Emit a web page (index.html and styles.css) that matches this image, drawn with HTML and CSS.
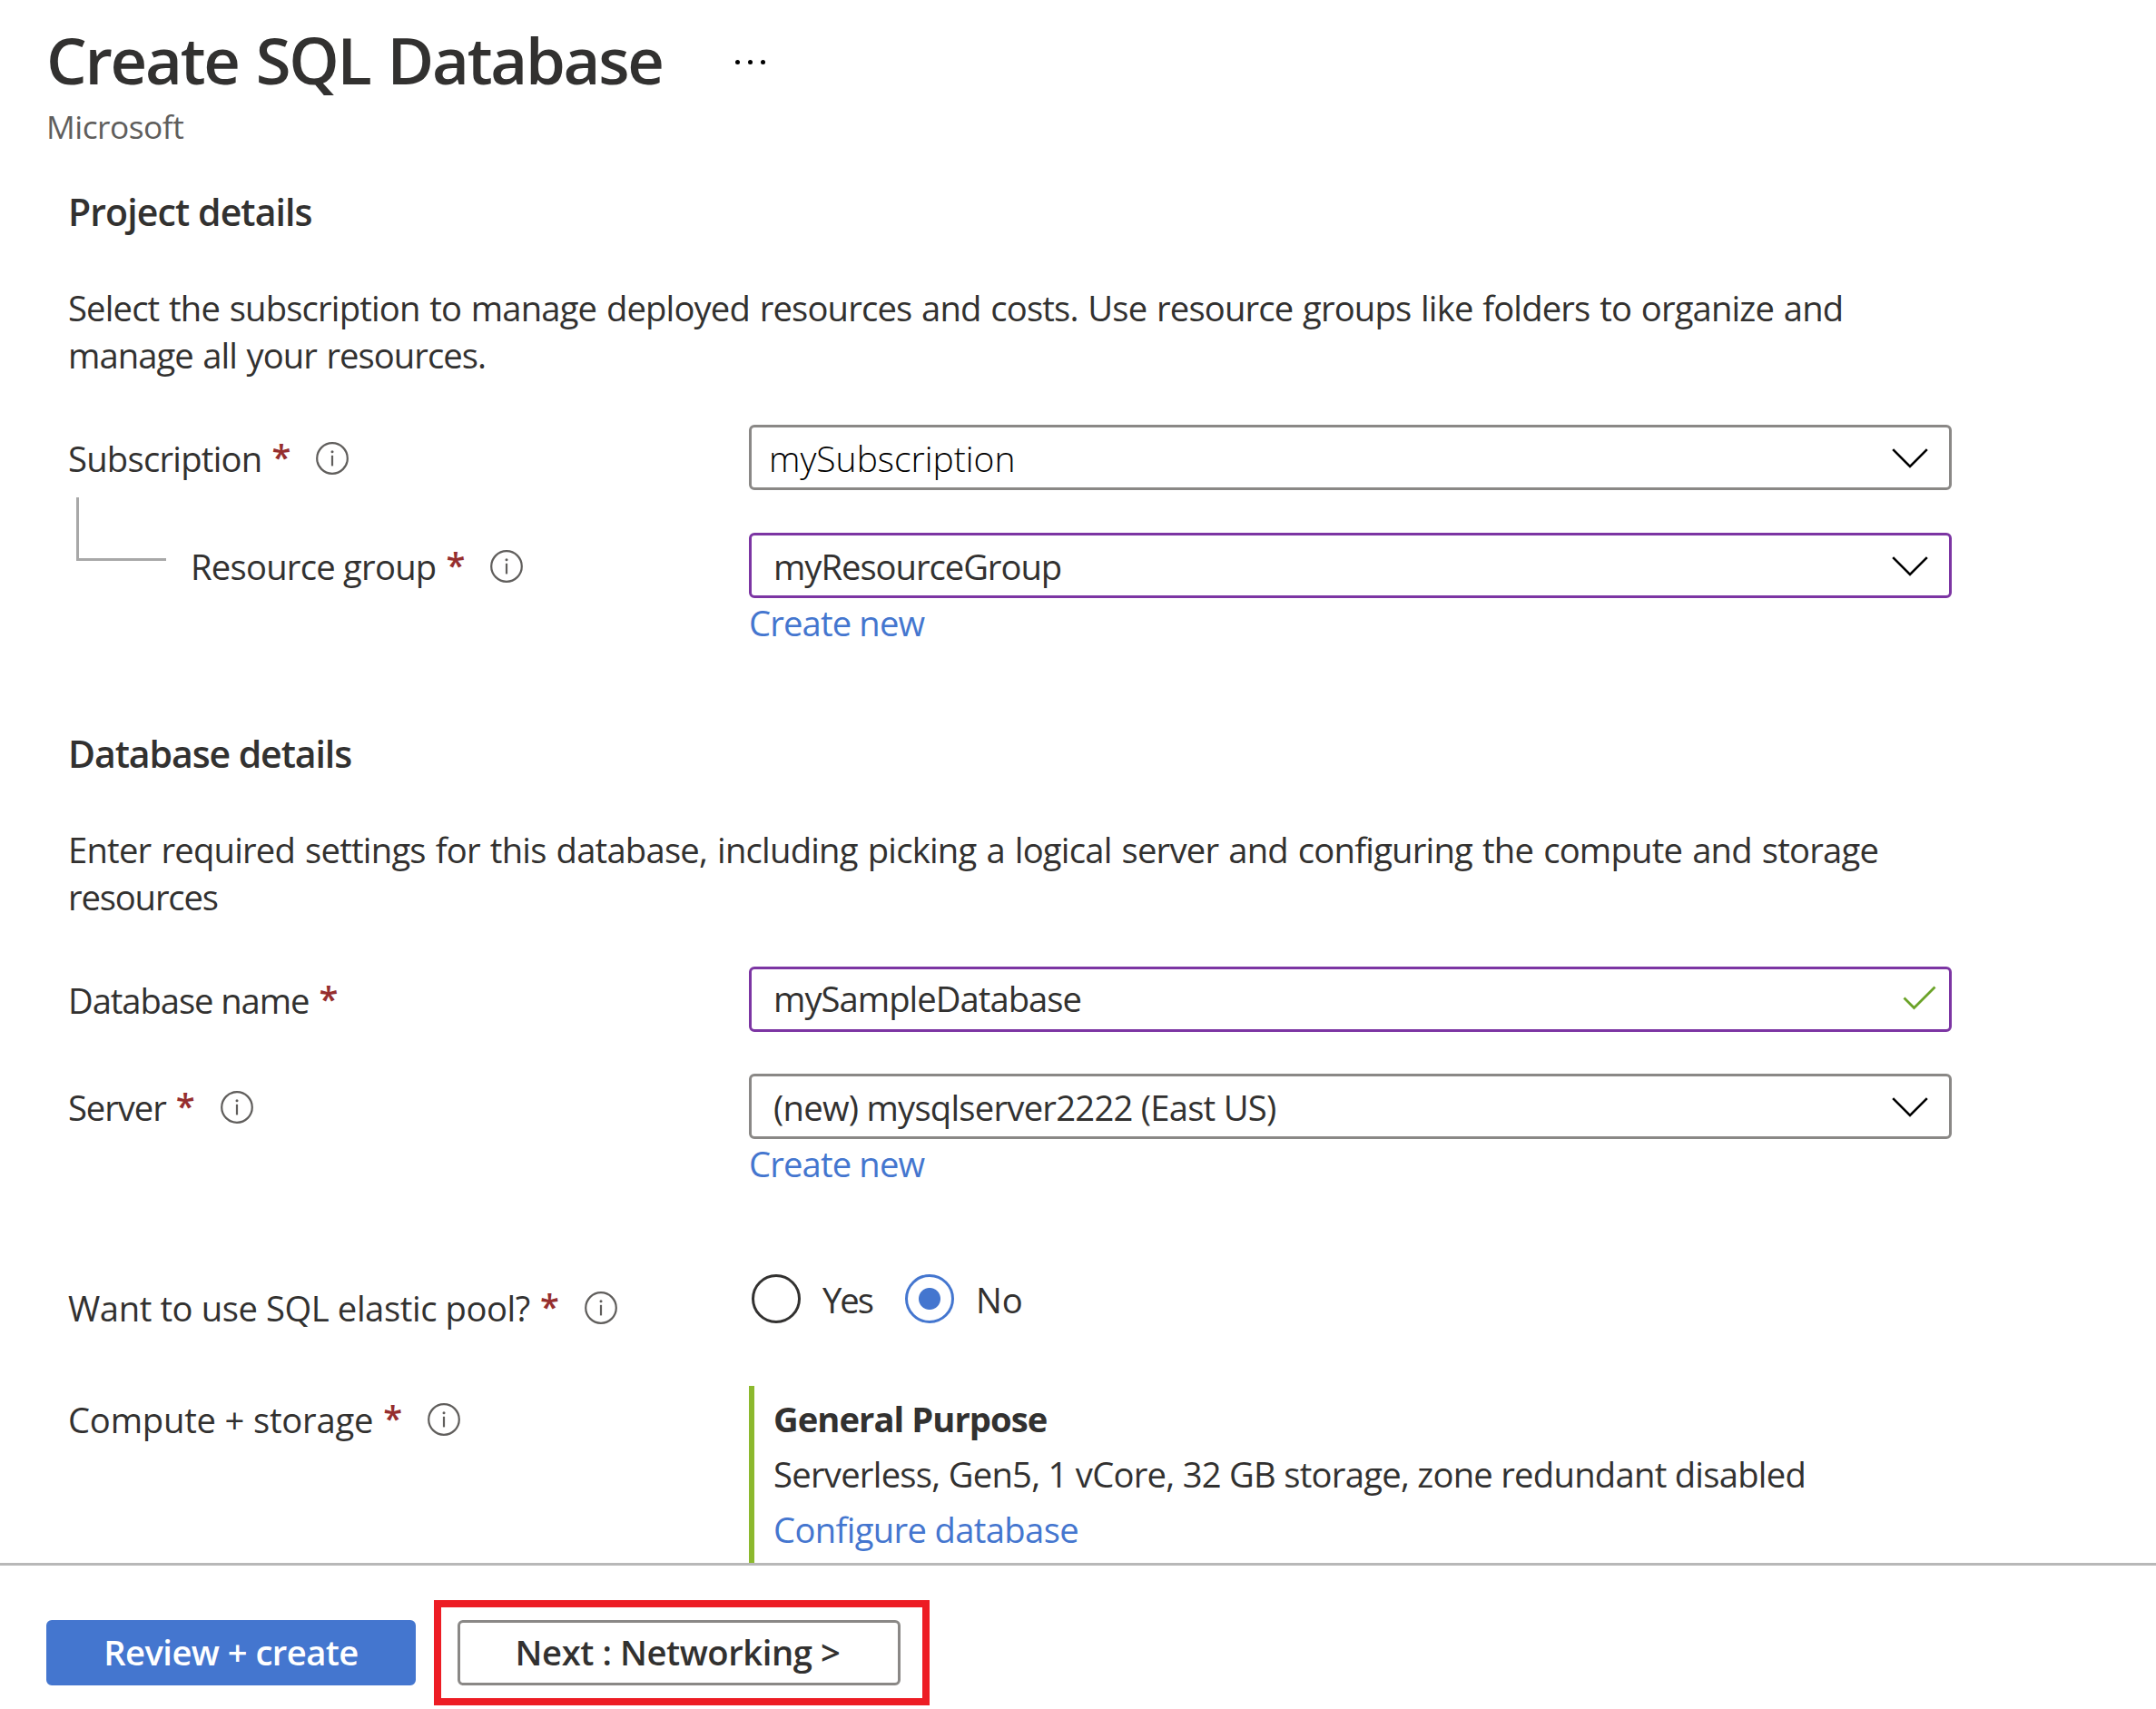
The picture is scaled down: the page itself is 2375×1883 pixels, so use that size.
FILE: index.html
```html
<!DOCTYPE html>
<html lang="en">
<head>
<meta charset="utf-8">
<title>Create SQL Database</title>
<link rel="stylesheet" href="styles.css">
</head>
<body>
<svg class="sprite" aria-hidden="true">
  <symbol id="info" viewBox="0 0 36 36"><circle cx="18" cy="18" r="16.8" fill="none" stroke="#605e5c" stroke-width="2.2"/><path d="M18 14.8V26.4" stroke="#605e5c" stroke-width="2.2"/><circle cx="18" cy="10.8" r="1.5" fill="#605e5c"/></symbol>
  <symbol id="chevron" viewBox="0 0 40 22"><path d="M1.2 1.2 20 20 38.8 1.2" fill="none" stroke="#000" stroke-width="2.6"/></symbol>
</svg>
<main class="page">
  <header class="header">
    <div class="title-row"><h1 class="title">Create SQL Database</h1><span class="more"><i></i><i></i><i></i></span></div>
    <p class="publisher">Microsoft</p>
  </header>

  <section class="section">
    <h2 class="heading">Project details</h2>
    <p class="intro">Select the subscription to manage deployed resources and costs. Use resource groups like folders to organize and<br><span class="tail">manage all your resources.</span></p>
    <div class="row">
      <div class="label"><span>Subscription</span><b class="req">*</b><svg class="info"><use href="#info"/></svg></div>
      <div class="select plain"><span>mySubscription</span><svg class="chevron"><use href="#chevron"/></svg></div>
    </div>
    <div class="row child">
      <div class="label"><i class="connector"></i><span>Resource group</span><b class="req">*</b><svg class="info"><use href="#info"/></svg></div>
      <div class="select edited"><span>myResourceGroup</span><svg class="chevron"><use href="#chevron"/></svg></div>
      <a class="link">Create new</a>
    </div>
  </section>

  <section class="section second">
    <h2 class="heading">Database details</h2>
    <p class="intro">Enter required settings for this database, including picking a logical server and configuring the compute and storage<br><span class="tail">resources</span></p>
    <div class="row">
      <div class="label tight"><span>Database name</span><b class="req">*</b></div>
      <div class="select edited input"><span>mySampleDatabase</span><svg class="check" viewBox="0 0 38 27"><path d="M1.5 13.5 12.5 24.5 35.5 1.5" fill="none" stroke="#6ba328" stroke-width="2.8"/></svg></div>
    </div>
    <div class="row server">
      <div class="label tight"><span>Server</span><b class="req">*</b><svg class="info"><use href="#info"/></svg></div>
      <div class="select"><span>(new) mysqlserver2222 (East US)</span><svg class="chevron"><use href="#chevron"/></svg></div>
      <a class="link">Create new</a>
    </div>
    <div class="row pool">
      <div class="label"><span>Want to use SQL elastic pool?</span><b class="req">*</b><svg class="info"><use href="#info"/></svg></div>
      <div class="radios">
        <i class="radio"></i><span class="yes">Yes</span>
        <i class="radio on"></i><span class="no">No</span>
      </div>
    </div>
    <div class="row compute">
      <div class="label"><span>Compute + storage</span><b class="req">*</b><svg class="info"><use href="#info"/></svg></div>
      <div class="tier">
        <strong>General Purpose</strong>
        <p>Serverless, Gen5, 1 vCore, 32 GB storage, zone redundant disabled</p>
        <a>Configure database</a>
      </div>
    </div>
  </section>
</main>
<footer class="footer">
  <button class="btn primary">Review + create</button>
  <div class="callout"><button class="btn next">Next : Networking &gt;</button></div>
</footer>
</body>
</html>
```
FILE: styles.css
```css
* { box-sizing: border-box; margin: 0; padding: 0; }
body { width: 2375px; height: 1883px; overflow: hidden; background: #fff; color: #323130; font: 38.2px/52px "Open Sans", "Noto Sans", sans-serif; letter-spacing: -0.75px; }
.sprite { display: none; }
span, p { white-space: nowrap; }

.page { height: 1722px; padding: 30px 0 0 51px; overflow: hidden; }
.title-row { display: flex; align-items: center; height: 72px; }
.title { font-size: 70.5px; line-height: 72px; font-weight: 600; letter-spacing: -2.25px; word-spacing: 3px; }
.more { display: flex; gap: 9px; margin-left: 80px; padding-top: 5px; }
.more i { width: 5px; height: 5px; border-radius: 50%; background: #000; }
.publisher { margin-top: 13px; font-size: 35.3px; line-height: 48px; letter-spacing: -0.5px; color: #605e5c; }

.section { padding-left: 24px; margin-top: 42px; }
.section.second { margin-top: 90px; }
.heading { font-size: 41px; line-height: 56px; font-weight: 600; letter-spacing: -0.9px; }
.second .heading { letter-spacing: -1.08px; }
.intro { margin: 52px 0 51px; letter-spacing: -0.83px; word-spacing: 1.6px; }
.second .intro { letter-spacing: -0.77px; word-spacing: 1.8px; }
.intro .tail { letter-spacing: -0.95px; }
.second .tail { letter-spacing: -1.15px; }

.row { display: grid; grid-template-columns: 750px 1325px; }
.row.server { margin-top: 46px; }
.row.child { margin-top: 47px; }
.label { display: flex; align-items: center; height: 72px; padding-top: 2px; }
.label.tight { letter-spacing: -1.07px; }
.pool .label { letter-spacing: -0.41px; }
.compute .label { letter-spacing: -0.2px; }
.req { margin-left: 11px; padding-bottom: 4px; color: #962e2e; font-weight: 600; letter-spacing: 0; }
.info { width: 36px; height: 36px; margin-left: 28px; }
.connector { width: 99px; height: 70px; margin: -83px 27px 0 9px; border: solid #a8a8a8; border-width: 0 0 3px 3px; }

.select { display: flex; align-items: center; justify-content: space-between; height: 72px; padding: 2px 23px 0 24px; border: 3px solid #8a8886; border-radius: 6px; }
.select.edited { border-color: #7c35a3; letter-spacing: -1.03px; }
.select.plain { padding-left: 19px; color: #000; font-size: 39px; font-weight: 300; letter-spacing: 0; }
.select.input { padding: 0 13px 3px 24px; letter-spacing: -0.96px; }
.chevron { width: 40px; height: 22px; }
.check { width: 38px; height: 27px; }
.link { grid-column: 2; margin-top: 1px; letter-spacing: -0.85px; }
.link, .tier a { color: #4476cf; }

.pool { margin-top: 96px; height: 123px; }
.radios { display: flex; height: 54px; line-height: 56px; padding-left: 3px; }
.radio { width: 54px; height: 54px; border: 3px solid #323130; border-radius: 50%; margin-right: 24px; }
.yes { width: 55px; margin-right: 36px; letter-spacing: -2px; }
.no { letter-spacing: 0; }
.radio.on { border-color: #4476cf; background: radial-gradient(circle, #4476cf 11.5px, transparent 12.5px); }

.tier { display: flex; flex-direction: column; height: 195px; padding: 6px 0 0 21px; border-left: 6px solid #8cb92e; line-height: 61px; letter-spacing: -0.73px; }
.tier strong { letter-spacing: -0.95px; }
.tier a { letter-spacing: -0.65px; }

.footer { display: flex; align-items: flex-start; height: 161px; padding: 38px 0 0 51px; border-top: 3px solid #b8b8b8; }
.btn { width: 488px; height: 72px; padding-bottom: 2px; border: 3px solid #8a8886; border-radius: 6px; background: #fff; color: #323130; font: 600 38.2px/64px "Open Sans", "Noto Sans", sans-serif; letter-spacing: -0.56px; }
.btn.primary { width: 407px; margin-top: 22px; border-color: #4476cf; background: #4476cf; color: #fff; }
.btn.next { padding-right: 3px; letter-spacing: -0.43px; }
.callout { width: 546px; height: 116px; margin-left: 20px; padding: 14px 0 0 18px; border: 8px solid #ed1c24; line-height: 0; }
```
